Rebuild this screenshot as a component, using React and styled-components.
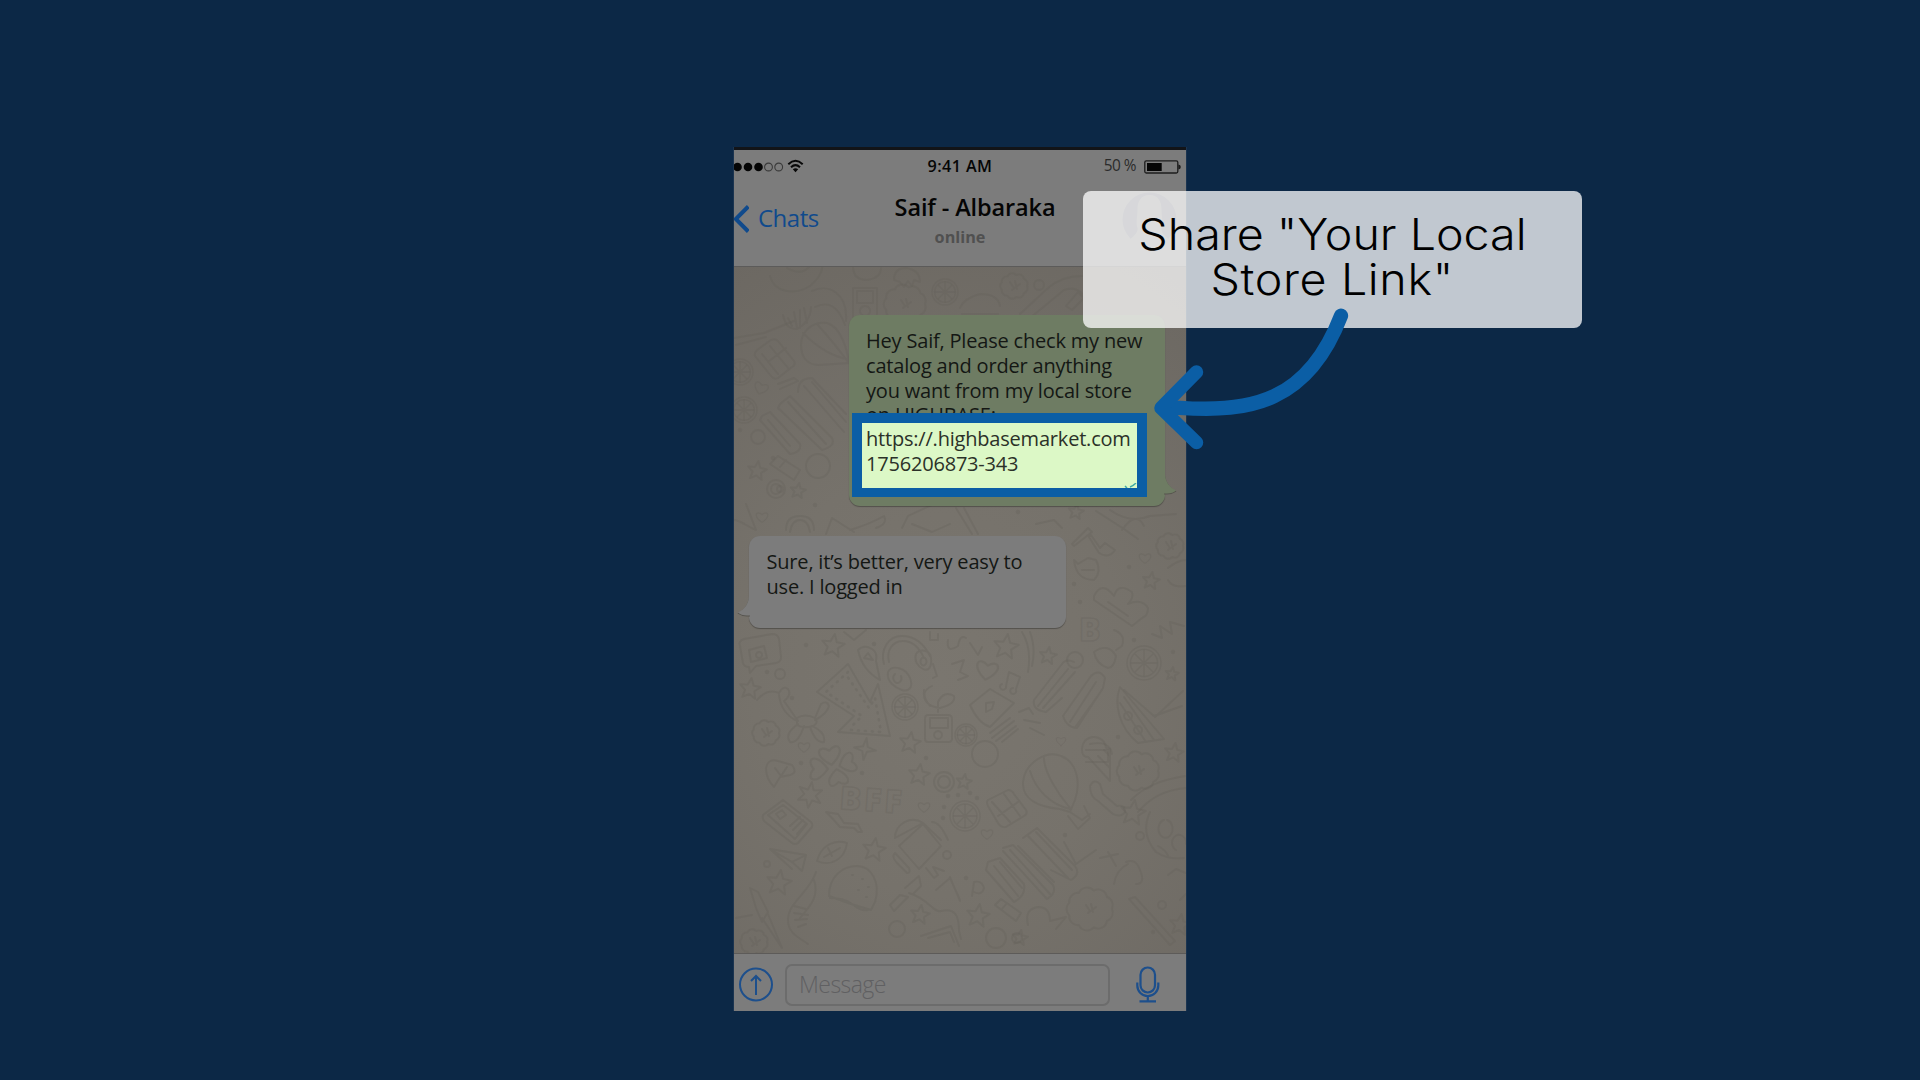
import React from "react";
import styled, { createGlobalStyle } from "styled-components";

const GlobalStyle = createGlobalStyle`
  body { margin: 0; background: #0c2846; }
  * { box-sizing: border-box; }
`;

const Page = styled.main`
  width: 1920px;
  height: 1080px;
  padding-top: 147px;
  display: flex;
  justify-content: center;
  align-items: flex-start;
  overflow: hidden;
  background: #0c2846;
  font-family: "Open Sans", "Noto Sans", sans-serif;
`;

const Phone = styled.section`
  position: relative;
  width: 452px;
  height: 864px;
  display: flex;
  flex-direction: column;
  border-top: 3px solid #121418;
  background: #7c7c7c;
  box-shadow: -1px 0 #1b3450, 1px 0 #1b3450;
`;

const Header = styled.header`
  height: 117px;
  border-bottom: 1px solid #5c5b5a;
  background: #7c7c7c;
`;

const StatusBar = styled.div`
  display: grid;
  grid-template-columns: 1fr auto 1fr;
  align-items: center;
  height: 32px;
  padding-right: 5px;
`;

const Signal = styled.div`
  display: flex;
  align-items: center;
  svg { display: block; }
`;

const Clock = styled.span`
  font-size: 16.2px;
  font-weight: 600;
  line-height: 20px;
  letter-spacing: 0.4px;
  color: #060606;
  padding-left: 5px;
`;

const Power = styled.div`
  display: flex;
  justify-content: flex-end;
  align-items: center;
  gap: 8px;
  font-size: 15.4px;
  letter-spacing: -0.5px;
  line-height: 20px;
  color: #2b2b2b;

  svg { margin-top: 1px; }
`;

const NavBar = styled.div`
  display: grid;
  grid-template-columns: 1fr auto 1fr;
  height: 84px;
`;

const Back = styled.div`
  display: flex;
  align-items: center;
  gap: 9px;
  height: 71px;
  font-size: 24px;
  line-height: 32px;
  letter-spacing: -0.5px;
  color: #104a8c;

  svg { margin-top: 2px; }
`;

const Contact = styled.div`
  display: flex;
  flex-direction: column;
  align-items: center;
  padding-top: 9px;
`;

const Name = styled.h1`
  margin: 0;
  padding-left: 29px;
  margin-right: -1px;
  font-size: 23.5px;
  font-weight: 600;
  line-height: 32px;
  letter-spacing: -0.12px;
  color: #050505;
`;

const Presence = styled.span`
  font-size: 16.2px;
  font-weight: 700;
  line-height: 22px;
  margin-top: 3px;
  color: #505050;
`;

const Avatar = styled.div`
  display: flex;
  justify-content: flex-end;
  padding: 10px 9px 0 0;
`;

const Wall = styled.div`
  position: relative;
  height: 686px;
  overflow: hidden;
  display: flex;
  flex-direction: column;
  align-items: flex-start;
  background: radial-gradient(ellipse 420px 480px at 46% 60%, #7a766f 0%, #76726b 45%, #6c6862 100%);
`;

const Pattern = styled.svg`
  position: absolute;
  inset: 0;
  fill: none;
  stroke: #64605a;
  stroke-opacity: 0.3;
  stroke-width: 1.9;
  stroke-linejoin: round;
  stroke-linecap: round;
`;

const Lettering = styled.text`
  font-family: "Open Sans", sans-serif;
  font-size: 32px;
  font-weight: 800;
  letter-spacing: 3px;
  stroke-width: 1.6;
`;

const Bubble = styled.div`
  position: relative;
  flex: none;
  width: ${(p) => p.$width}px;
  height: ${(p) => p.$height}px;
  margin: ${(p) => p.$margin};
  padding: ${(p) => p.$padding};
  border-radius: 11px;
  background: ${(p) => p.$fill};
  box-shadow: 0 1px 1px rgba(0, 0, 0, 0.3);
  font-size: 20px;
  line-height: 24.8px;
  letter-spacing: -0.19px;
  color: #141714;
  white-space: pre-line;
`;

const Tail = styled.svg`
  position: absolute;
  bottom: ${(p) => p.$bottom}px;
  ${(p) => p.$side}: -12px;
  overflow: visible;
`;

const Composer = styled.footer`
  flex: 1;
  display: flex;
  align-items: center;
  padding: 4px 26px 0 5px;
  border-top: 1px solid #5d5b59;
  background: #7c7c7c;
`;

const Field = styled.div`
  width: 325px;
  height: 42px;
  margin: 0 26px 0 11.5px;
  padding-left: 12.5px;
  border: 2px solid #6c6c6c;
  border-radius: 7px;
  font-size: 23px;
  font-weight: 350;
  line-height: 37px;
  letter-spacing: -0.55px;
  color: #606062;
`;

const Highlight = styled.div`
  position: absolute;
  left: 118px;
  top: 263px;
  width: 295px;
  height: 84px;
  padding: 4px 4px 0;
  border: 10px solid #0b5ea5;
  border-bottom-width: 9px;
  background: #dcf8c6;
  font-size: 20px;
  line-height: 24.8px;
  letter-spacing: -0.2px;
  color: #2b3128;
  white-space: nowrap;
`;

const Ticks = styled.svg`
  position: absolute;
  right: 0;
  bottom: 0;
`;

const Callout = styled.div`
  position: absolute;
  left: 349px;
  top: 41px;
  width: 499px;
  height: 137px;
  display: flex;
  flex-direction: column;
  align-items: center;
  padding-top: 21px;
  border-radius: 8px;
  background: rgba(255, 255, 255, 0.745);
`;

const CalloutLine = styled.span`
  font-family: Inter, Lato, sans-serif;
  font-size: 43.3px;
  font-weight: 300;
  line-height: 45px;
  letter-spacing: ${(p) => p.$spacing}px;
  transform: scaleX(1.076);
  color: #000;
  white-space: nowrap;
`;

const Arrow = styled.svg`
  position: absolute;
  left: 416px;
  top: 153px;
  fill: none;
  stroke: #0b5ea5;
  stroke-linecap: round;
  stroke-linejoin: round;
`;

const starPath = (cx, cy, r, n = 5, inner = 0.45) => {
  const pts = [];
  for (let i = 0; i < n * 2; i++) {
    const a = -Math.PI / 2 + (i * Math.PI) / n + 0.15;
    const d = i % 2 ? r * inner : r;
    pts.push(`${(cx + d * Math.cos(a)).toFixed(1)},${(cy + d * Math.sin(a)).toFixed(1)}`);
  }
  return `M${pts.join("L")}Z`;
};

const stars = [
  [833, 646, 12], [1006, 647, 13], [750, 689, 11], [910, 743, 11], [810, 795, 13, 6], [779, 883, 13],
  [919, 775, 11], [874, 850, 12], [920, 915, 10], [978, 916, 12], [1133, 813, 13], [1151, 581, 9],
  [865, 749, 11, 4, 0.3], [964, 782, 8], [1048, 656, 9], [1174, 753, 10], [757, 471, 10], [798, 491, 8],
  [1172, 674, 7], [1180, 925, 11], [1076, 512, 8], [1020, 938, 8],
];

const hearts = [
  [987, 670, 11, 10], [804, 747, 6, 0], [1061, 741, 5, 0], [924, 807, 6, 0], [987, 834, 6, 0], [761, 388, 7, 20],
  [1145, 558, 6, 0], [762, 517, 6, 0], [830, 755, 11, -10], [818, 769, 11, -90], [848, 763, 10, 70], [838, 778, 10, 170],
];

const rings = [
  [944, 782, 10], [944, 782, 6], [776, 489, 9], [776, 489, 5], [996, 938, 10], [897, 929, 8], [947, 855, 4],
  [1140, 836, 4], [780, 674, 5], [1039, 285, 5], [1162, 905, 4], [767, 864, 3], [1017, 938, 5], [780, 489, 3],
  [818, 466, 12], [985, 754, 13], [758, 437, 7], [1075, 660, 8],
];

const wheels = [
  [905, 707, 13], [966, 735, 11], [965, 816, 15], [1144, 663, 17], [945, 292, 13], [740, 372, 13], [744, 410, 13],
];

const dots = [
  [801, 763], [948, 796], [944, 807], [958, 795], [970, 793], [977, 798], [943, 818], [1065, 835], [966, 878],
  [1129, 567], [1080, 602], [1074, 584], [1134, 640], [792, 698], [767, 672], [806, 645], [874, 644], [1173, 652],
  [740, 430], [773, 458], [815, 505], [930, 340], [1018, 512], [926, 758], [1118, 737], [1153, 932], [862, 773],
];

const blobs = [
  [1090, 909, 22], [766, 733, 13], [1138, 771, 20], [1014, 286, 13], [905, 304, 20], [1170, 546, 13], [754, 942, 13],
];

const scallop = (cx, cy, r) => {
  const n = 9;
  let d = "";
  for (let i = 0; i <= n; i++) {
    const a = (i * 2 * Math.PI) / n;
    const x = (cx + r * Math.cos(a)).toFixed(1);
    const y = (cy + r * 0.85 * Math.sin(a)).toFixed(1);
    d += i ? `A${r * 0.4} ${r * 0.4} 0 0 1 ${x} ${y}` : `M${x} ${y}`;
  }
  return d;
};

const sketches = [
  // speech bubble with camera
  "M740 646q-2-5 4-7l28-5q6 0 7 5l2 18q0 5-5 6l-20 3-6 7-1-6q-5 0-6-4zM749 650l15-4 3 12-16 4zM759 652a3 3 0 1 0 .1 0",
  // headphones
  "M884 664c-4-14 4-28 18-28s22 8 28 20M889 662c-3-12 4-21 14-21s16 6 21 17M888 672c4-8 18-4 22 6s-2 14-8 12-16-8-14-18zM916 654c4-6 14-4 15 4s-2 14-8 11-9-9-7-15zM895 674a4 5 0 1 0 6 2M922 658a3 4 0 1 0 3 0",
  // dotted arrow
  "M848 664l-31 28 37 24-16 16 52 4-12-52-8 18z",
  // balloon dog
  "M757 700q10-12 22-7 4-8 9-4 4 6-4 12l14 20M779 695q2 18 18 26M797 718q8-5 18 0 4 5-2 8-10 3-16-1zM798 724q-14 10-8 18 8 2 14-16M812 726q14 6 12 16-8 2-14-15M815 718l6-14q6-4 8 2-2 8-14 14",
  // pear
  "M858 650q6-6 14-1 6 4 4 12l4 19q-18-10-22-30zM864 658l4-5 5 7z",
  // tangled cord and player
  "M930 706q-12-14 2-20M924 690q-2 16 16 18 16-4 14-12-10-6-16 6v10M928 715h20q4 0 4 4v20q0 3-4 3h-20q-3 0-3-3v-20q0-4 3-4zM930 718h18v10h-18zM938 731a4 4 0 1 0 .1 0",
  // wrapped letter
  "M970 705l20-16 24 14-24 24q-12-4-20-22zM986 703l8-1-2 7-6 3z",
  "M990 733l20-15M992 738l22-17M996 741l20-15M1002 742l16-13M1019 712l10-4 4 6M1024 720l16 3M1030 728l14 7",
  // music notes
  "M1006 686l3-14 11 5-4 12M1006 686a3 3 0 1 1-4-2M1016 690a3 3 0 1 1-3-2",
  // fries
  "M1034 700l28-36q4-6 12-2M1038 706l30-37M1043 708l32-36M1034 700q-2 10 12 12l16-14M1063 716l28-40q8-8 14 2l-2 10-26 40q-10 0-14-12zM1070 722l26-40M1076 726l26-36",
  // pizza boat
  "M1120 687c-6 16-2 40 18 56l26-4zM1124 697l30 43M1120 703l26 39M1128 712a4 4 0 1 0 .1 0M1138 726a4 4 0 1 0 .1 0",
  "M1124 690l30 26 28-10M1155 717l28-26",
  // cloud hand
  "M766 768q2-10 12-7l14 4q6 8-2 10l-10 2-6 10q-8-8-8-19zM775 768l6 8 6-9",
  // phone
  "M763 815l20-15 28 22q2 2 1 5l-14 16q-3 2-6 0l-28-22q-2-3-1-6zM768 815l15-10 24 19-12 15zM776 814l6-4 4 5-6 4zM790 826l10-9M793 830l10-10M797 834l9-10",
  // ribbon
  "M826 812l12 2 6 9 14 1 4 8-4 0-4-4-14-1-8-9z",
  // gift
  "M988 800l20-10q4 0 6 4l12 16q2 4-2 6l-18 11q-5 1-8-4l-10-17q-2-4 0-6zM992 802l18 20M1004 794l16 22M998 816l20-14",
  // hot air balloon
  "M1023 782c2-20 24-32 38-26 16 6 20 26 14 44l-5 12-10-3c-22-2-38-10-37-27zM1030 771c6 20 22 34 40 38M1044 758c0 14 14 36 26 50M1070 812l12 8 8-6M1068 816l10 13 12-11-6-12",
  // ice cream
  "M1082 750a12 12 0 1 1 24-2l4 1v32l-22-24q-6 0-6-7M1098 756l12 12M1104 750l6 6",
  // wrench
  "M1090 786q4-8 10-2l3 10 14 12q8-2 8 6-4 6-12 2l-15-13q-8-4-8-15z",
  // striped planet
  "M1131 800c14-14 30-20 54-24M1138 812c12-14 26-22 48-24M1150 812q-10 22 6 40 12 8 28 6M1164 820a7 9 0 1 0 3 0M1176 850a7 8 0 1 1 10-6M1158 846q8 4 10 10",
  // paper plane
  "M770 849l36 6-4 16-10-9zM792 862l14-7M770 849l22 20",
  // leaf
  "M817 861c4-16 18-22 30-18-2 16-16 24-30 18zM824 857l16-9M828 848l4 8",
  // robot
  "M895 838a18 18 0 0 1 28-15zM923 823l18 17M899 846l24-22 18 22-22 23zM932 822q8 0 16 18M895 853q-4 4 2 10l10 10q4 0 2-5zM926 868l8 10 4-3-5-8 11 4",
  // pencils
  "M1023 838l14-10 38 38q6 8-4 14l-20-10M1028 836l40 42M1036 832l36 38M1003 848l10-3 40 40q4 8-6 14l-44-48M1010 850l40 44M1018 846l36 36M988 862l12-4 24 26q2 12-10 18l-28-32zM994 866l24 30M1000 862l22 26",
  "M1064 842l12 22 20-14M1100 858l18-4M1108 852l8 14",
  // trumpet
  "M816 872c-6 20-28 30-28 48 0 14 12 18 20 24M814 880c6 18-6 28-14 38M794 906l12 3M794 913l14 2M795 920l12-1M798 927l8-3",
  // cap
  "M829 896c0-20 14-30 28-30s24 16 18 36l-4 8-20-6zM830 898q14 0 22 6 10 8 16 6M852 875h1M862 879h1M868 887h1M858 890h1M866 897h1",
  "M890 905l10-10 8 2-14 14zM905 888l14-12 2 10-8 8M936 890l14-12 10 22M950 877l10 24 M972 896l2-14q8-2 10 6-2 8-10 4M909 893c20 6 24 20 32 18 16-4 18 8 18 20l2 8",
  "M921 936l30-10 8 20M928 938l22-6 4 10",
  // eraser
  "M995 905l6-6 20 14-5 8zM1002 909l5-6M1028 925q-4-16 10-18 12 0 12 14l16-4-10 12",
  // brush
  "M750 888l8 4 10 20-6 10-6-14zM762 918l20 30M768 914l14 34M736 918l16-3",
  "M1129 899l6-2 40 44-5 4zM1126 862q10-4 14 8 6 14-4 14M1128 864q-12 6-14 20",
  "M1168 875l8-6 10 4M1180 900l6-6",
  // palm and doughnut
  "M770 276c4 16 24 20 40 10q14-12 12-22M787 268q14 8 22-1M783 315c2 8 4 14 14 14 8-4 14-12 14-22M788 318l4 8M794 312l3 16M800 310v18M804 308l3 15",
  "M812 291c16-8 36 2 34 30M815 307q20-10 30 18M734 338l30-5 30-12M736 345l30-8",
  "M801 345c0-14 12-24 26-22 14 4 20 26 22 40l-30 2c-12 0-18-8-18-20zM803 333q22 22 44 26M817 324q18 20 31 38",
  "M757 350l14-10q4-2 7 1l16 20q2 4-2 6l-14 11q-4 2-7-2l-16-20q-1-3 2-6zM762 354l16 20M770 346l18 22M768 362l18-14",
  "M778 384l16-6 4 3-18 8M798 392q0-14 14-14l34 36M804 386l40 46M812 382l34 40M780 404l10-8 42 42q4 8-10 12l-44-42zM788 402l38 42M762 416l8-4 30 32q2 8-10 10l-30-34zM768 420l22 26",
  "M770 464l8-8 22 14-6 10zM780 467l6-7M853 288h24v30h-24zM857 291h16v12h-16zM865 306a5 5 0 1 0 .1 0M853 266q0 14 14 14 14-2 14-12",
  // mushroom, cupcake, rainbow
  "M894 280q0-12 12-12 14 2 14 14l-6-2-2 6-4-5-4 6-4-5zM960 308q4-10 20-14 18 0 20 12M962 314h36M965 320h32M1020 314l28-26q14-12 34-12M1030 318l34-28q12-4 18 4M1066 306l12-14 6 6-12 12z",
  // aeroplane, crown, cat
  "M1096 511l28 18 14 10M1110 510q20 14 40 6l26-2M1122 530q14-20 22-4M1072 544l16-16 4 4-18 14zM1089 537l10 16q10 6 16-3l-10-7-5 5-9-13z",
  "M1074 560q2 20 20 20 8-8 2-20l-8-2-10 6zM1082 570h12M1094 596q8-16 20 0 4-14 18-4 2 6-4 12 14-6 20 4 0 8-6 10l-10 8-38-26zM1108 602l20 14",
  "M1114 630q12 4 8 16l-6 4M1094 652q14-10 22 4-2 12-8 12-12-4-14-16zM1152 634l10 4-2-12 12 8-2-12 14 4M1168 568q10-8 18-8M1168 580q4 8 18 6",
  "M1090 744q20-4 22 10M1086 750h22v12h-22",
  "M734 520c6 0 12 6 22 10l-10-26M786 530q0-14 14-14t14 14M790 532q2-12 10-12t10 12M826 534l6-16 22 14M850 530q20-6 34-14 4 8-8 12M902 528l6-12 30-14M912 524l20 8 18-8M956 508l16 26M964 508l14 26M1036 524l18-4 8 8",
  "M844 632l10 8 12-10M930 632v8h8v-6M948 640q-2 14 10 6 2-12 8-8M952 664l12-4-4 12 8 4-10 4M1022 632q10 16 6 40M1030 632q6 16 2 34M970 643l8 12 4-8M933 664l4 12-4 2",
];

function WallPattern() {
  return (
    <Pattern width="452" height="686" viewBox="734 267 452 686" aria-hidden="true">
      {stars.map(([x, y, r, n, k], i) => <path key={i} d={starPath(x, y, r, n, k)} />)}
      {hearts.map(([x, y, s, a], i) => (
        <path
          key={i}
          transform={`translate(${x} ${y}) rotate(${a}) scale(${s / 10})`}
          d="M0 9C-16-2-9-12 0-4 9-12 16-2 0 9Z"
        />
      ))}
      {rings.map(([x, y, r], i) => <circle key={i} cx={x} cy={y} r={r} />)}
      {wheels.map(([x, y, r], i) => (
        <g key={i} transform={`translate(${x} ${y})`} strokeWidth="1.4">
          <circle r={r} />
          <circle r={r * 0.8} />
          <path d={`M${-r * 0.75} 0H${r * 0.75}M0 ${-r * 0.75}V${r * 0.75}M${-r * 0.5} ${-r * 0.5}L${r * 0.5} ${r * 0.5}M${r * 0.5} ${-r * 0.5}L${-r * 0.5} ${r * 0.5}`} />
        </g>
      ))}
      {dots.map(([x, y], i) => <circle key={i} cx={x} cy={y} r="1.3" />)}
      {blobs.map(([x, y, r], i) => (
        <g key={i}>
          <path d={scallop(x, y, r)} />
          <path d={`M${x - 4} ${y - 4}l4 6M${x + 1} ${y - 5}l2 8M${x + 6} ${y - 2}l-8 6`} />
        </g>
      ))}
      {sketches.map((d, i) => <path key={i} d={d} />)}
      <Lettering x="839" y="809" transform="rotate(4 839 809)">BFF</Lettering>
      <Lettering x="1079" y="641">B</Lettering>
      <path d="M848 672l-22 20 36 24-11 11M851 730l30 2-6-34-6 10-22-32" strokeDasharray="1 6" strokeWidth="2.6" />
    </Pattern>
  );
}

function SignalIcons() {
  return (
    <svg width="72" height="16" viewBox="0 0 72 16">
      {[3.5, 14, 24.5].map((x) => <circle key={x} cx={x} cy="9" r="4.3" fill="#050505" />)}
      {[34.5, 44.7].map((x) => (
        <circle key={x} cx={x} cy="9" r="3.9" fill="none" stroke="#3a3a3a" strokeWidth="1.1" />
      ))}
      <g fill="none" stroke="#080808" strokeWidth="2">
        <path d="M54.3 6.2Q61.5 -0.6 68.7 6.2" />
        <path d="M57 9.3Q61.5 5 66 9.3" />
      </g>
      <path d="M58.8 11.3Q61.5 9.1 64.2 11.3L61.5 14.2Z" fill="#080808" />
    </svg>
  );
}

export default function App() {
  return (
    <>
      <GlobalStyle />
      <Page>
        <Phone>
          <Header>
            <StatusBar>
              <Signal><SignalIcons /></Signal>
              <Clock>9:41 AM</Clock>
              <Power>
                50 %
                <svg width="37" height="14" viewBox="0 0 37 14">
                  <rect x="0.8" y="0.8" width="33" height="12.2" rx="1.5" fill="none" stroke="#1c1c1c" strokeWidth="1.3" />
                  <rect x="3" y="3" width="14.7" height="8" fill="#050505" />
                  <path d="M34.3 4.5q2.5.3 2.5 2.5t-2.5 2.5z" fill="#1c1c1c" />
                </svg>
              </Power>
            </StatusBar>
            <NavBar>
              <Back>
                <svg width="15" height="28" viewBox="0 0 15 28" fill="none" stroke="#104a8c" strokeWidth="4">
                  <path d="M14.3 1.5L1.8 14l12.5 12.5" />
                </svg>
                Chats
              </Back>
              <Contact>
                <Name>Saif - Albaraka</Name>
                <Presence>online</Presence>
              </Contact>
              <Avatar>
                <svg width="55" height="55" viewBox="0 0 55 55">
                  <circle cx="27.5" cy="27.5" r="27" fill="#61646e" />
                  <path d="M27.5 3c-9 0-12 7-12 14 0 8-2 14 0 19 1 5-5 9-8 12a27 27 0 0 0 40 0c-3-3-9-7-8-12 2-5 0-11 0-19 0-7-3-14-12-14z" fill="#7c7c7c" />
                </svg>
              </Avatar>
            </NavBar>
          </Header>

          <Wall>
            <WallPattern />
            <Bubble $width={316} $height={191} $margin="48px 0 0 115px" $padding="14px 0 0 17px" $fill="#6e7c63">
              {"Hey Saif, Please check my new\ncatalog and order anything\nyou want from my local store\non HIGHBASE:"}
              <Tail $side="right" $bottom={12} width="13" height="20" viewBox="0 0 13 20">
                <path d="M0 20.5h3q6-.5 9.5-3Q3 13 1 2z" fill="#56554e" />
                <path d="M0 1h1q1 11 11 15.5-3 3-9 3H0z" fill="#6e7c63" />
              </Tail>
            </Bubble>
            <Bubble $width={317} $height={92} $margin="30px 0 0 15px" $padding="14px 0 0 17.5px" $fill="#7c7c7c">
              {"Sure, it’s better, very easy to\nuse. I logged in"}
              <Tail $side="left" $bottom={12} width="13" height="20" viewBox="0 0 13 20">
                <path d="M13 20.5h-3q-6-.5-9.5-3Q10 13 12 2z" fill="#56544f" />
                <path d="M13 1h-1q-1 11-11 15.5 3 3 9 3h3z" fill="#7c7c7c" />
              </Tail>
            </Bubble>
          </Wall>

          <Composer>
            <svg width="34" height="35" viewBox="0 0 34 35" fill="none" stroke="#1d4f8c" strokeWidth="2">
              <circle cx="17" cy="17.5" r="16" />
              <path d="M17 28V10M12 14l5-5 5 5" />
            </svg>
            <Field>Message</Field>
            <svg width="24" height="37" viewBox="0 0 24 37" fill="none" stroke="#1d4f8c" strokeWidth="2.2">
              <rect x="4.5" y="1.5" width="14.5" height="25" rx="7.25" />
              <path d="M1.3 16.5v3a10.5 10.5 0 0 0 21 0v-3M11.8 30v5M3.5 35.3h16.5" />
            </svg>
          </Composer>

          <Highlight>
            https://.highbasemarket.com
            <br />
            1756206873-343
            <Ticks width="14" height="5" viewBox="0 0 14 5">
              <path d="M2 3l2 2M7 4q3-1 6-4" fill="none" stroke="#3fa9a5" strokeWidth="1.5" />
            </Ticks>
          </Highlight>

          <Callout>
            <CalloutLine $spacing={0}>Share "Your Local</CalloutLine>
            <CalloutLine $spacing={0.6}>Store Link"</CalloutLine>
          </Callout>

          <Arrow width="200" height="160" viewBox="1150 303 200 160">
            <path d="M1341 315.7C1308 402 1250 413 1180 407.8H1164" strokeWidth="14.3" />
            <path d="M1196.5 372L1161 408L1196.5 442.5" strokeWidth="13.5" />
          </Arrow>
        </Phone>
      </Page>
    </>
  );
}
